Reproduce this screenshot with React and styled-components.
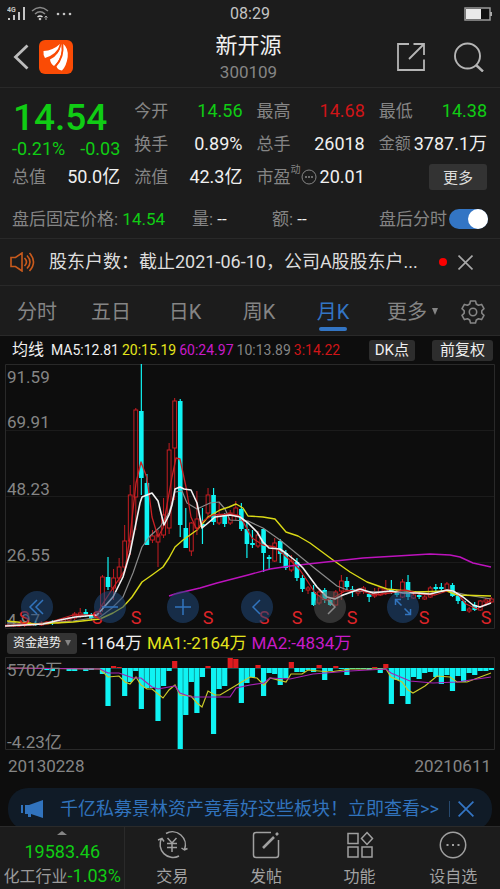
import React, { useState } from "react";
import styled, { createGlobalStyle, css } from "styled-components";

const GlobalStyle = createGlobalStyle`
  * { box-sizing: border-box; }
  html, body { margin: 0; background: #0d0d0d; }
  body {
    font-family: Roboto, "Noto Sans CJK SC", sans-serif;
    color: #f0f0f0;
  }
  button { font: inherit; color: inherit; background: none; border: 0; padding: 0; cursor: pointer; }
  h1, p, dl, dt, dd { margin: 0; font-weight: 400; }
  svg { display: block; }
`;

const GREEN = "#10cc14";
const RED = "#cf1518";
const BLUE = "#3375c4";
const tones = { green: GREEN, red: RED, white: "#f0f0f0", gray: "#858585", yellow: "#e4e41c", magenta: "#c81bc8" };

const Page = styled.div`
  display: flex;
  flex-direction: column;
  min-height: 100vh;
  background: #0d0d0d;
`;

const Top = styled.header`
  background: #1c1c1c;
`;

const StatusBar = styled.div`
  display: grid;
  grid-template-columns: 1fr auto 1fr;
  align-items: center;
  height: 27px;
  padding: 0 7px;
  font-size: 16px;
  line-height: 20px;
  color: #c4c4c4;
`;

const StatusEnd = styled.div`
  display: flex;
  justify-content: flex-end;
`;

const TitleBar = styled.div`
  display: grid;
  grid-template-columns: 1fr auto 1fr;
  align-items: center;
  height: 61px;
  padding: 0 16px 0 13px;
  border-bottom: 1px solid #292929;
`;

const TitleSide = styled.div`
  display: flex;
  align-items: center;
  gap: ${(p) => p.$gap}px;
  justify-content: ${(p) => (p.$end ? "flex-end" : "flex-start")};
`;

const IconButton = styled.button`
  display: flex;
  align-items: center;
  justify-content: center;
  color: #a8a8a8;
`;

const BannerClose = styled(IconButton)`
  color: ${BLUE};
`;

const Title = styled.div`
  padding-top: 4px;
  text-align: center;
`;

const StockName = styled.h1`
  font-size: 22px;
  line-height: 26px;
`;

const StockCode = styled.p`
  font-size: 17px;
  line-height: 26px;
  color: #858585;
`;

const Quotes = styled.section`
  display: grid;
  grid-template-columns: repeat(4, minmax(0, 1fr));
  grid-auto-rows: 33px;
  column-gap: 14px;
  padding: 6px 13px 7px 12px;
`;

const PriceBlock = styled.div`
  grid-row: span 2;
  display: flex;
  flex-direction: column;
  justify-content: flex-end;
  align-items: center;
  padding-right: 12px;
`;

const Price = styled.div`
  font-size: 37px;
  line-height: 40px;
  color: ${GREEN};
  font-weight: 500;
`;

const Change = styled.div`
  display: flex;
  justify-content: space-between;
  align-self: stretch;
  margin-right: -12px;
  font-size: 18px;
  line-height: 22px;
  color: ${GREEN};
`;

const Stat = styled.dl`
  display: flex;
  align-items: center;
  justify-content: space-between;
  white-space: nowrap;
  line-height: 24px;
`;

const StatLabel = styled.dt`
  display: flex;
  align-items: center;
  font-size: ${(p) => (p.$small ? 16 : 17)}px;
  color: #858585;
`;

const Raised = styled.sup`
  align-self: flex-start;
  font-size: 10px;
  line-height: 10px;
`;

const StatValue = styled.dd`
  font-size: 18px;
  color: ${(p) => tones[p.$tone || "white"]};
`;

const MoreButton = styled.button`
  justify-self: end;
  align-self: center;
  width: 58px;
  height: 26px;
  border-radius: 3px;
  background: #333;
  color: #dcdcdc;
  font-size: 15px;
`;

const AfterHours = styled.section`
  display: grid;
  grid-template-columns: 180fr 80fr 107fr 109fr;
  align-items: center;
  height: 39px;
  padding: 0 12px;
  border-bottom: 1px solid #292929;
  font-size: 17px;
  line-height: 24px;
  white-space: nowrap;
  color: #858585;
`;

const Tinted = styled.span`
  color: ${(p) => tones[p.$tone]};
`;

const SwitchLabel = styled.label`
  display: flex;
  align-items: center;
  justify-content: space-between;
  font-size: 17px;
`;

const Switch = styled.input`
  appearance: none;
  flex: none;
  display: flex;
  justify-content: flex-end;
  width: 39px;
  height: 20px;
  margin: 0;
  border-radius: 10px;
  background: #555;
  &::before {
    content: "";
    width: 20px;
    height: 20px;
    margin-right: auto;
    border-radius: 50%;
    background: #fff;
  }
  &:checked { background: ${BLUE}; }
  &:checked::before { margin-right: 0; }
`;

const News = styled.section`
  display: flex;
  align-items: center;
  height: 47px;
  padding: 0 27px 0 10px;
  border-bottom: 1px solid #292929;
`;

const NewsText = styled.p`
  flex: 1;
  margin-left: 13px;
  font-size: 18px;
  line-height: 26px;
  white-space: nowrap;
  overflow: hidden;
  color: #dedede;
`;

const Dot = styled.span`
  width: 8px;
  height: 8px;
  margin: 0 11px 0 8px;
  border-radius: 50%;
  background: #fb0000;
`;

const Tabs = styled.nav`
  display: grid;
  grid-template-columns: repeat(5, 74fr) 86fr 34fr;
  height: 50px;
  padding: 2px 10px 0 0;
  border-bottom: 1px solid #292929;
`;

const Tab = styled.button`
  display: flex;
  align-items: center;
  justify-content: center;
  gap: 4px;
  position: relative;
  font-size: 20px;
  line-height: 26px;
  color: #858585;
  ${(p) => p.$active && css`
    color: ${BLUE};
    &::after {
      content: "";
      position: absolute;
      bottom: 4px;
      width: 28px;
      height: 4px;
      border-radius: 2px;
      background: ${BLUE};
    }
  `}
`;

const Legend = styled.div`
  display: flex;
  align-items: center;
  gap: 3px;
  height: 28px;
  padding: 0 7px 0 12px;
  font-size: 14px;
  line-height: 20px;
  white-space: nowrap;
`;

const LegendTitle = styled.span`
  margin-right: 4px;
  font-size: 16px;
`;

const Chip = styled.button`
  height: 21px;
  padding: 0 ${(p) => p.$pad}px;
  margin-left: ${(p) => (p.$push ? "auto" : "14px")};
  border-radius: 3px;
  background: #2d2d2d;
  font-size: 15px;
  line-height: 20px;
`;

const ChartArea = styled.section`
  position: relative;
`;

const ChartSvg = styled.svg`
  width: 100%;
  height: auto;
  font-family: Roboto, "Noto Sans CJK SC", sans-serif;
`;

const Controls = styled.div`
  position: absolute;
  left: 0;
  bottom: 6px;
  width: 88%;
  display: grid;
  grid-template-columns: repeat(6, 1fr);
  justify-items: center;
`;

const RoundButton = styled.button`
  display: flex;
  align-items: center;
  justify-content: center;
  width: 32px;
  height: 32px;
  border-radius: 50%;
  color: ${(p) => (p.$muted ? "#8a8a8a" : "#3274bd")};
  background: ${(p) => (p.$muted ? "rgba(90, 90, 90, 0.5)" : "rgba(33, 72, 122, 0.55)")};
`;

const Indicator = styled.div`
  display: flex;
  align-items: center;
  gap: 5px;
  height: 28px;
  padding: 0 7px;
  font-size: 17px;
  line-height: 24px;
  white-space: nowrap;
`;

const IndicatorButton = styled.button`
  display: flex;
  align-items: center;
  justify-content: center;
  gap: 4px;
  width: 70px;
  height: 21px;
  border-radius: 3px;
  background: #333;
  font-size: 12px;
`;

const Dates = styled.div`
  display: flex;
  justify-content: space-between;
  padding: 3px 9px 0 8px;
  font-size: 17px;
  line-height: 24px;
  color: #858585;
`;

const Banner = styled.aside`
  display: flex;
  align-items: center;
  height: 42px;
  margin: auto 8px -4px;
  padding: 0 18px 0 13px;
  border-radius: 20px;
  background: #101b27;
  color: #3173bd;
`;

const BannerLink = styled.a`
  flex: 1;
  margin-left: 16px;
  font-size: 18px;
  line-height: 26px;
  white-space: nowrap;
  color: inherit;
  text-decoration: none;
`;

const Divider = styled.span`
  width: 1px;
  height: 16px;
  margin-right: 8px;
  background: #27496e;
`;

const BottomNav = styled.nav`
  position: relative;
  display: grid;
  grid-template-columns: 126fr repeat(4, 94fr);
  height: 63px;
  background: #1c1c1c;
  border-top: 1px solid #2a2a2a;
`;

const Sector = styled.button`
  display: flex;
  flex-direction: column;
  align-items: center;
  border-right: 1px solid #2a2a2a;
  padding-top: 4px;
  white-space: nowrap;
  font-size: 16px;
  line-height: 22px;
  color: #9a9a9a;
`;

const SectorValue = styled.span`
  margin-top: 3px;
  font-size: 18px;
  line-height: 27px;
  color: ${GREEN};
`;

const SectorChange = styled.span`
  font-size: 18px;
  color: ${GREEN};
`;

const NavItem = styled.button`
  display: flex;
  flex-direction: column;
  align-items: center;
  padding-top: 4px;
  gap: 6px;
  font-size: 16px;
  line-height: 24px;
  color: #a2a2a2;
`;

/* Horizontal centre of the i-th monthly candle. */
const cx = (i) => 8 + i * 5.556;

/* [up?, high, body top, body bottom, low] */
const candles = [
  [1, 624, 625, 626, 627], [1, 624, 625, 626, 627], [1, 623, 624, 626, 627], [1, 623, 624, 625, 627],
  [1, 622, 624, 625, 626], [0, 621, 623, 624, 626], [1, 621, 623, 625, 626], [1, 621, 622, 624, 625],
  [0, 620, 622, 623, 625], [1, 620, 621, 623, 624], [1, 618, 620, 622, 623], [1, 617, 618, 620, 622],
  [1, 612, 614, 618, 620], [1, 608, 613, 616, 618], [0, 609, 612, 615, 617], [0, 613, 615, 618, 620],
  [1, 612, 614, 616, 618], [1, 575, 577, 606, 612], [0, 557, 577, 587, 590], [1, 569, 578, 588, 600],
  [1, 558, 567, 578, 583], [1, 525, 541, 567, 573], [1, 485, 495, 541, 555], [1, 408, 410, 497, 530],
  [0, 364, 411, 478, 495], [0, 474, 483, 545, 545], [1, 530, 536, 540, 543], [1, 530, 535, 542, 567],
  [1, 498, 515, 535, 538], [1, 443, 450, 528, 534], [1, 398, 401, 448, 500], [0, 399, 401, 525, 537],
  [0, 508, 528, 548, 548], [1, 522, 523, 551, 556], [1, 491, 519, 528, 535], [0, 508, 524, 526, 544],
  [1, 488, 495, 513, 518], [0, 488, 495, 522, 525], [1, 503, 515, 523, 525], [0, 513, 515, 524, 527],
  [1, 510, 513, 523, 525], [1, 501, 508, 515, 520], [0, 503, 509, 529, 531], [0, 522, 529, 544, 558],
  [0, 530, 543, 545, 548], [1, 531, 535, 546, 548], [0, 528, 529, 553, 572], [0, 555, 557, 559, 570],
  [1, 538, 543, 561, 562], [0, 539, 541, 554, 563], [0, 550, 553, 568, 570], [1, 555, 561, 570, 572],
  [0, 558, 562, 578, 581], [0, 575, 578, 589, 592], [1, 586, 588, 590, 594], [0, 585, 592, 605, 606],
  [1, 590, 592, 603, 605], [0, 588, 590, 600, 603], [0, 598, 600, 605, 606], [1, 590, 592, 605, 606],
  [1, 575, 581, 591, 600], [0, 577, 581, 587, 590], [0, 586, 589, 591, 597], [1, 588, 591, 593, 596],
  [1, 586, 588, 591, 594], [0, 593, 594, 597, 602], [1, 588, 594, 596, 598], [1, 586, 588, 595, 596],
  [1, 580, 589, 591, 595], [0, 580, 589, 592, 594], [0, 590, 592, 595, 597], [1, 579, 582, 597, 598],
  [0, 575, 582, 597, 600], [1, 593, 595, 598, 599], [0, 592, 595, 597, 599], [1, 594, 597, 599, 600],
  [1, 586, 588, 597, 598], [0, 584, 587, 589, 592], [0, 583, 587, 589, 592], [1, 582, 584, 590, 592],
  [0, 583, 585, 596, 597], [0, 594, 596, 601, 604], [0, 600, 601, 611, 611], [1, 607, 609, 611, 613],
  [0, 602, 605, 610, 611], [1, 600, 601, 610, 611], [1, 598, 600, 602, 606], [1, 597, 599, 602, 603],
];

/* Moving averages drawn over the candles. */
const averages = [
  { color: "#8a8a8a", width: 1.2, points: "7,624 30,624 73,621 100,617 112,608 123,597 133,573 142,547 150,536 160,527 169,513 175,492 182,491 187,503 197,509 210,503 219,502 225,509 230,520 248,521 263,528 280,540 313,567 337,586 350,591 393,592 417,592 450,591 467,595 491,599" },
  { color: "#dada16", width: 1.4, points: "7,621 37,624 73,622 100,619 113,613 123,607 132,597 142,582 152,575 163,567 169,558 175,547 183,540 197,530 208,517 220,510 229,507 236,504 243,508 248,516 263,517 275,519 286,532 298,536 310,543 333,560 350,572 367,582 387,589 417,592 447,591 457,595 491,596" },
  { color: "#bd13bd", width: 1.4, points: "169,596 175,594 183,592 200,588 217,583 248,575 270,569 290,566 317,563 363,558 397,556 430,554 450,555 460,557 473,563 491,567" },
  { color: "#c92024", width: 1.3, points: "5,626 43,624 60,619 73,615 97,615 102,605 113,588 125,570 130,537 136,483 141,462 147,478 152,517 158,537 163,528 167,505 172,477 176,458 180,459 186,487 191,517 197,530 203,521 213,515 230,514 240,516 252,538 263,545 275,547 290,560 300,570 308,582 315,593 325,600 333,598 345,591 360,590 373,595 390,593 405,590 420,594 435,595 450,590 457,593 466,604 477,609 484,605 491,600" },
  { color: "#f2f2f2", width: 1.6, points: "5,626 43,624 60,620 75,617 97,615 105,606 113,597 123,577 130,553 136,523 140,503 142,497 147,495 152,493 158,501 162,517 164,525 169,515 172,505 175,489 180,487 184,489 191,490 197,503 202,528 208,523 215,517 230,515 240,517 248,523 257,532 263,542 269,548 280,549 287,554 297,562 303,568 317,587 327,597 335,599 343,595 360,589 373,593 390,591 403,593 417,593 430,594 447,590 453,591 463,597 473,605 480,607 491,603" },
];

const gridRows = [430, 496, 562];
const priceLabels = [["91.59", 383], ["69.91", 428], ["48.23", 495], ["26.55", 561], ["4.97", 626]];
const sellMarks = [24, 97, 136, 208, 264, 297, 352, 424, 486];

/* Signed bar lengths of the fund-flow chart, positive upwards. */
const flows = [
  0, 0, 0, 0, 0, -1, -1, -2, -3, -1, 0, -3, -3, 0, -3, -2,
  0, -6, -38, 2, 1, -28, -14, -3, -41, -20, -20, -53, -18, -3, 7, -81,
  -47, -14, -45, -9, 2, -66, -21, -18, 10, 9, -35, -15, -9, 3, -28, -5,
  -6, -17, -10, 6, -4, -4, -2, -4, 3, -12, -3, 2, -1, -7, -1, -1,
  -1, -2, 1, -5, 4, -36, -12, -28, -36, -9, -11, -5, -4, -9, -16, -7,
  -23, -8, -14, -5, -7, -3, -3, -2,
];

const flowAverages = [
  { color: "#c9c929", points: "7,668 100,669 108,677 119,676 125,682 130,684 136,677 141,685 147,689 152,689 163,698 169,690 175,685 180,695 191,696 197,703 202,707 208,691 215,695 220,695 230,689 250,677 257,678 264,685 270,678 286,682 291,674 302,674 308,670 330,672 350,669 386,669 391,677 402,682 408,690 413,693 425,686 437,676 450,677 457,682 467,682 491,673" },
  { color: "#a622b4", points: "7,668 100,669 108,673 119,673 133,678 141,678 152,687 158,689 175,686 180,693 191,697 230,697 236,688 250,685 264,683 270,678 290,679 313,674 350,671 386,669 391,673 410,681 433,683 457,682 491,677" },
];

function Candle({ index, data }) {
  const [up, high, top, bottom, low] = data;
  const x = cx(index);
  if (up) {
    return (
      <g stroke="#c61d22" fill="none">
        <path d={`M${x} ${high}V${top}M${x} ${bottom}V${low}`} />
        <rect x={x - 1.9} y={top} width="3.8" height={bottom - top} />
      </g>
    );
  }
  return (
    <g fill="#0ff3f3">
      <rect x={x - 0.6} y={high} width="1.2" height={low - high} />
      <rect x={x - 2.3} y={top} width="4.6" height={bottom - top} />
    </g>
  );
}

function PriceChart() {
  return (
    <ChartSvg viewBox="0 364 500 265" role="img" aria-label="月K">
      <path d="M5.500 364.500H494.500V628.500H5.500Z" fill="none" stroke="#292929" />
      {gridRows.map((y) => <path key={y} d={`M6 ${y}.5H494`} stroke="#1b1b1b" />)}
      <g fill="#858585" fontSize="17">
        {priceLabels.map(([t, y]) => <text key={t} x="7" y={y}>{t}</text>)}
      </g>
      {candles.map((c, i) => <Candle key={i} index={i} data={c} />)}
      {averages.map((a) => (
        <polyline key={a.color} points={a.points} fill="none" stroke={a.color} strokeWidth={a.width} strokeLinejoin="round" />
      ))}
      <g fill="#dc2428" fontSize="18" textAnchor="middle">
        {sellMarks.map((x) => <text key={x} x={x} y="624">S</text>)}
      </g>
    </ChartSvg>
  );
}

function FlowChart() {
  return (
    <ChartSvg viewBox="0 657 500 94" role="img" aria-label="资金趋势">
      <path d="M5.500 657.500H494.500V749.500H5.500Z" fill="none" stroke="#292929" />
      <path d="M6 668.500H494" stroke="#174545" />
      {flows.map((v, i) => v !== 0 && (
        <rect key={i} x={cx(i) - 2.6} y={v > 0 ? 668 - v : 668} width="5.200" height={Math.abs(v)} fill={v > 0 ? "#e01b1f" : "#0ff3f3"} />
      ))}
      {flowAverages.map((a) => (
        <polyline key={a.color} points={a.points} fill="none" stroke={a.color} strokeWidth="1.200" />
      ))}
      <g fill="#858585" fontSize="17">
        <text x="7" y="676">5702万</text>
        <text x="7" y="748">-4.23亿</text>
      </g>
    </ChartSvg>
  );
}

function StatusIcons() {
  return (
    <svg width="67" height="20" viewBox="0 0 67 20" fill="#c4c4c4">
      <text x="0" y="8" fontSize="7" fontFamily="Roboto, sans-serif" fontWeight="700">4G</text>
      <path d="M1 14h2v2H1zM6 11h2v5H6zM11 8h2v8h-2zM16 3h2v13h-2z" />
      <g fill="none" stroke="#8a8a8a" strokeWidth="1.500">
        <path d="M25 7q8-7 16 0M28 10q5-4.500 10 0" />
        <path d="M30.500 13q2.500-2 5 0" stroke="#e0e0e0" />
      </g>
      <circle cx="33" cy="15" r="1.300" />
      <path d="M39 12v4M37.500 13.500l1.500-1.500 1.500 1.500" stroke="#aaa" fill="none" />
      <circle cx="51" cy="10" r="1.300" /><circle cx="57" cy="10" r="1.300" /><circle cx="63" cy="10" r="1.300" />
    </svg>
  );
}

const Cross = ({ size, width = 1.5 }) => (
  <svg width={size} height={size} viewBox="0 0 14 14" fill="none" stroke="currentColor" strokeWidth={width}>
    <path d="M.500.500l13 13M13.500.500l-13 13" />
  </svg>
);

const controlIcons = [
  ["最左", "M10 3L3 10l7 7M16 3L9 10l7 7"],
  ["缩小", "M2 10h16"],
  ["放大", "M2 10h16M10 2v16"],
  ["左移", "M13 3l-7 7 7 7"],
  ["右移", "M8 3l7 7-7 7"],
  ["全屏", "M8.500 8.500L2.500 2.500M2.500 8V2.500H8M11.500 11.500l6 6M17.500 12v5.500H12"],
];

function Controllers() {
  return (
    <Controls>
      {controlIcons.map(([name, d], i) => (
        <RoundButton key={name} aria-label={name} $muted={i === 4}>
          <svg width="20" height="20" viewBox="0 0 20 20" fill="none" stroke="currentColor" strokeWidth="1.500"><path d={d} /></svg>
        </RoundButton>
      ))}
    </Controls>
  );
}

const navItems = [
  ["交易", (
    <path d="M8 2.500A13 13 0 0 1 26.500 18.500M21 25A13 13 0 0 1 3.500 7.500M0 9l4-1.500 2 3M29.500 17.500l-3 1.500-3-2M9.500 7l4.500 5 4.500-5M9 12.500h10M9 16.500h10M14 12v9" />
  )],
  ["发帖", <><path d="M19 1.500H4Q1.500 1.500 1.500 4v20q0 2.500 2.500 2.500h20q2.500 0 2.500-2.500V9" /><path d="M11 17L22 6M24 4l2-2" strokeWidth="2.600" /></>],
  ["功能", <><path d="M2 2.500h10v10H2zM2 16h10v10H2zM16 16h10v10H16z" /><path d="M21 1.500l5.500 6-5.500 6-5.500-6z" /></>],
  ["设自选", <><circle cx="14" cy="14" r="12.700" /><path d="M7.500 14h2M13 14h2M18.500 14h2" strokeWidth="2" /></>],
];

const tabNames = ["分时", "五日", "日K", "周K", "月K"];

function StatCell({ label, value, tone, small, extra }) {
  return (
    <Stat>
      <StatLabel $small={small}>{label}{extra}</StatLabel>
      <StatValue $tone={tone}>{value}</StatValue>
    </Stat>
  );
}

export default function App() {
  const [tab, setTab] = useState("月K");
  return (
    <Page>
      <GlobalStyle />
      <Top>
        <StatusBar>
          <StatusIcons />
          <span>08:29</span>
          <StatusEnd>
            <svg width="29" height="14" viewBox="0 0 29 14">
              <path d="M1 1h25v12H1z" fill="#111" stroke="#999" strokeWidth="1.500" />
              <path d="M2 2h15v10H2z" fill="#e9e9e9" /><path d="M26 5h2v4h-2z" fill="#aaa" />
            </svg>
          </StatusEnd>
        </StatusBar>
        <TitleBar>
          <TitleSide $gap={10}>
            <IconButton aria-label="返回">
              <svg width="16" height="26" viewBox="0 0 16 26" fill="none" stroke="#bcbcbc" strokeWidth="2.800"><path d="M14.500 1.500L2.500 13l12 11.500" /></svg>
            </IconButton>
            <svg width="34" height="34" viewBox="0 0 34 34" role="img" aria-label="东方财富">
              <rect width="34" height="34" rx="6" fill="#fa4b05" />
              <g fill="#fff">
                <path d="M4.500 11Q14 10.500 21 4Q18.500 14 6 18Q4 15 4.500 11Z" />
                <path d="M22.300 4Q20.500 15 11 19.500Q11.500 23.500 15 26Q24.500 18 22.300 4Z" />
                <path d="M24.300 4Q29.500 8 28.700 17Q27.500 26 23 30.500Q18.500 30 17.500 26.500Q26 17 24.300 4Z" />
              </g>
              <path d="M21.500 5Q19.500 14.500 11 18M23.500 5Q24.500 16 17 25" fill="none" stroke="#fa4b05" strokeWidth="1.100" />
            </svg>
          </TitleSide>
          <Title>
            <StockName>新开源</StockName>
            <StockCode>300109</StockCode>
          </Title>
          <TitleSide $end $gap={29}>
            <IconButton aria-label="分享">
              <svg width="28" height="28" viewBox="0 0 28 28" fill="none" stroke="#b5b5b5" strokeWidth="1.800"><path d="M12 1H1v26h26V16.500M16.500 1H27v11M27 1L12 16" /></svg>
            </IconButton>
            <IconButton aria-label="搜索">
              <svg width="30" height="30" viewBox="0 0 30 30" fill="none" stroke="#b5b5b5" strokeWidth="1.900"><circle cx="13.500" cy="14" r="12.500" /><path d="M22 23l7 6.500" strokeWidth="2.400" /></svg>
            </IconButton>
          </TitleSide>
        </TitleBar>

        <Quotes>
          <PriceBlock>
            <Price>14.54</Price>
            <Change><span>-0.21%</span><span>-0.03</span></Change>
          </PriceBlock>
          <StatCell label="今开" value="14.56" tone="green" />
          <StatCell label="最高" value="14.68" tone="red" />
          <StatCell label="最低" value="14.38" tone="green" />
          <StatCell label="换手" value="0.89%" />
          <StatCell label="总手" value="26018" />
          <StatCell label="金额" value="3787.1万" small />
          <StatCell label="总值" value="50.0亿" />
          <StatCell label="流值" value="42.3亿" />
          <StatCell
            label="市盈"
            value="20.01"
            extra={(
              <>
                <Raised>动</Raised>
                <svg width="16" height="16" viewBox="0 0 16 16" fill="none" stroke="#858585"><circle cx="8" cy="8" r="7" /><path d="M4 8h2M7 8h2M10 8h2" strokeWidth="1.500" /></svg>
              </>
            )}
          />
          <MoreButton>更多</MoreButton>
        </Quotes>

        <AfterHours>
          <span>盘后固定价格: <Tinted $tone="green">14.54</Tinted></span>
          <span>量: <Tinted $tone="white">--</Tinted></span>
          <span>额: <Tinted $tone="white">--</Tinted></span>
          <SwitchLabel>盘后分时<Switch type="checkbox" role="switch" defaultChecked /></SwitchLabel>
        </AfterHours>

        <News>
          <svg width="26" height="20" viewBox="0 0 26 20" fill="none" stroke="#c85a1c" strokeWidth="1.600">
            <path d="M1 5.500h4.500L12 1v18l-6.500-4.500H1z" /><path d="M14.500 6q4 4 0 8M17 3.500q6 6.500 0 13M19.500 1q8 9 0 18" />
          </svg>
          <NewsText>股东户数：截止2021-06-10，公司A股股东户...</NewsText>
          <Dot />
          <IconButton aria-label="关闭"><Cross size={15} /></IconButton>
        </News>

        <Tabs>
          {tabNames.map((name) => (
            <Tab key={name} $active={tab === name} onClick={() => setTab(name)}>{name}</Tab>
          ))}
          <Tab>更多<svg width="8" height="8" viewBox="0 0 8 8" fill="#858585"><path d="M1 0h6L4 7z" /></svg></Tab>
          <IconButton aria-label="设置">
            <svg width="26" height="26" viewBox="0 0 26 26" fill="none" stroke="#858585" strokeWidth="1.600" strokeLinejoin="round">
              <path d="M10.500 2h5l.8 3 2.200 1.300 3.100-.9 2.400 4.200-2.200 2.200v2.400l2.200 2.200-2.400 4.200-3.100-.9-2.200 1.300-.8 3h-5l-.8-3-2.200-1.300-3.100.9L2 16.400l2.200-2.200v-2.400L2 9.600l2.400-4.200 3.100.9L9.700 5z" />
              <circle cx="13" cy="13" r="3.700" />
            </svg>
          </IconButton>
        </Tabs>
      </Top>

      <Legend>
        <LegendTitle>均线</LegendTitle>
        <span>MA5:12.81</span>
        <Tinted $tone="yellow">20:15.19</Tinted>
        <Tinted $tone="magenta">60:24.97</Tinted>
        <Tinted $tone="gray">10:13.89</Tinted>
        <Tinted $tone="red">3:14.22</Tinted>
        <Chip $push $pad={6}>DK点</Chip>
        <Chip $pad={8}>前复权</Chip>
      </Legend>

      <ChartArea>
        <PriceChart />
        <Controllers />
      </ChartArea>

      <Indicator>
        <IndicatorButton>资金趋势<svg width="6" height="6" viewBox="0 0 6 6" fill="#858585"><path d="M0 0h6L3 6z" /></svg></IndicatorButton>
        <span>-1164万</span>
        <Tinted $tone="yellow">MA1:-2164万</Tinted>
        <Tinted $tone="magenta">MA2:-4834万</Tinted>
      </Indicator>

      <FlowChart />
      <Dates><span>20130228</span><span>20210611</span></Dates>

      <Banner>
        <svg width="23" height="18" viewBox="0 0 23 18" fill="currentColor"><path d="M0 5h2v8H0zM4 5h4L22 0v18L10 14v3H7v-3H4z" /></svg>
        <BannerLink href="#more">千亿私募景林资产竟看好这些板块！立即查看&gt;&gt;</BannerLink>
        <Divider />
        <BannerClose aria-label="关闭广告"><Cross size={16} /></BannerClose>
      </Banner>

      <BottomNav>
        <Sector>
          <svg width="10" height="4" viewBox="0 0 10 4" fill="#858585"><path d="M0 4l5-4 5 4z" /></svg>
          <SectorValue>19583.46</SectorValue>
          <span>化工行业<SectorChange>-1.03%</SectorChange></span>
        </Sector>
        {navItems.map(([name, icon]) => (
          <NavItem key={name}>
            <svg width="28" height="28" viewBox="0 0 28 28" fill="none" stroke="#a0a0a0" strokeWidth="1.500" overflow="visible">{icon}</svg>
            {name}
          </NavItem>
        ))}
      </BottomNav>
    </Page>
  );
}
